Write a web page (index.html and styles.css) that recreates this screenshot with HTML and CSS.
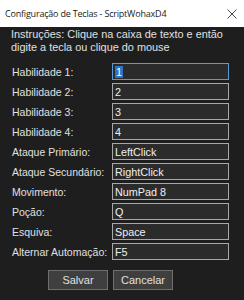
FILE: index.html
```html
<!DOCTYPE html>
<html lang="pt">
  <head>
    <meta charset="UTF-8" />
    <meta name="viewport" content="width=device-width, initial-scale=1.0" />
    <link rel="stylesheet" href="styles.css">
    <title>Configuração de Teclas - ScriptWohaxD4</title>
  </head>
  <body>
    <div class="titlebar">
      <span class="title">Configuração de Teclas - ScriptWohaxD4</span>
      <svg class="close" width="10" height="10" viewBox="0 0 10 10">
        <path d="M0.5 0.5 L9.5 9.5 M9.5 0.5 L0.5 9.5" stroke="#333" stroke-width="0.9" fill="none" />
      </svg>
    </div>
    <div class="dialog">
      <p class="instructions">
        Instruções: Clique na caixa de texto e então<br />
        digite a tecla ou clique do mouse
      </p>
      <div class="keys">
        <label for="k1">Habilidade 1:</label>
        <div class="keybox focused" id="k1"><span class="sel">1</span></div>
        <label for="k2">Habilidade 2:</label>
        <div class="keybox" id="k2">2</div>
        <label for="k3">Habilidade 3:</label>
        <div class="keybox" id="k3">3</div>
        <label for="k4">Habilidade 4:</label>
        <div class="keybox" id="k4">4</div>
        <label for="k5">Ataque Primário:</label>
        <div class="keybox" id="k5">LeftClick</div>
        <label for="k6">Ataque Secundário:</label>
        <div class="keybox" id="k6">RightClick</div>
        <label for="k7">Movimento:</label>
        <div class="keybox" id="k7">NumPad 8</div>
        <label for="k8">Poção:</label>
        <div class="keybox" id="k8">Q</div>
        <label for="k9">Esquiva:</label>
        <div class="keybox" id="k9">Space</div>
        <label for="k10">Alternar Automação:</label>
        <div class="keybox" id="k10">F5</div>
      </div>
      <div class="buttons">
        <button type="button" class="btn">Salvar</button>
        <button type="button" class="btn">Cancelar</button>
      </div>
    </div>
  </body>
</html>
```
FILE: styles.css
```css
html,
body {
  margin: 0;
  width: 244px;
  height: 300px;
  background: #1e1e1e;
  overflow: hidden;
}
.titlebar {
  height: 27px;
  background: #ffffff;
  display: flex;
  align-items: center;
  justify-content: space-between;
  padding: 0 4px 0 5px;
  box-sizing: border-box;
}
.title {
  font-family: "Open Sans", sans-serif;
  font-size: 9px;
  color: #1a1a1a;
  letter-spacing: -0.2px;
}
.close {
  margin-right: 3px;
}
.dialog {
  font-family: "Liberation Sans", Arial, sans-serif;
  color: #e0e0e0;
  padding: 0 0 0 11px;
}
.instructions {
  margin: 0;
  padding-top: 1px;
  font-size: 10.9px;
  line-height: 13px;
}
.keys {
  display: grid;
  grid-template-columns: 101px 117px;
  grid-auto-rows: 17px;
  row-gap: 3px;
  margin-top: 9px;
  font-size: 10.5px;
}
.keys label {
  display: flex;
  align-items: center;
  padding-left: 1px;
}
.keybox {
  border: 1px solid #a8a8a8;
  background: #2b2b2b;
  box-sizing: border-box;
  display: flex;
  align-items: center;
  padding-left: 2px;
  color: #f0f0f0;
  font-size: 10.8px;
}
.keybox.focused {
  border-color: #5b9bd5;
}
.sel {
  background: #2f73c9;
  color: #fff;
  padding: 0 1px;
}
.buttons {
  display: flex;
  gap: 5px;
  padding: 10px 0 0 37px;
}
.btn {
  width: 60px;
  height: 20px;
  background: #3f3f3f;
  border: 1px solid #6e6e6e;
  color: #e0e0e0;
  font-family: "Liberation Sans", Arial, sans-serif;
  font-size: 11px;
  padding: 0;
}
```
